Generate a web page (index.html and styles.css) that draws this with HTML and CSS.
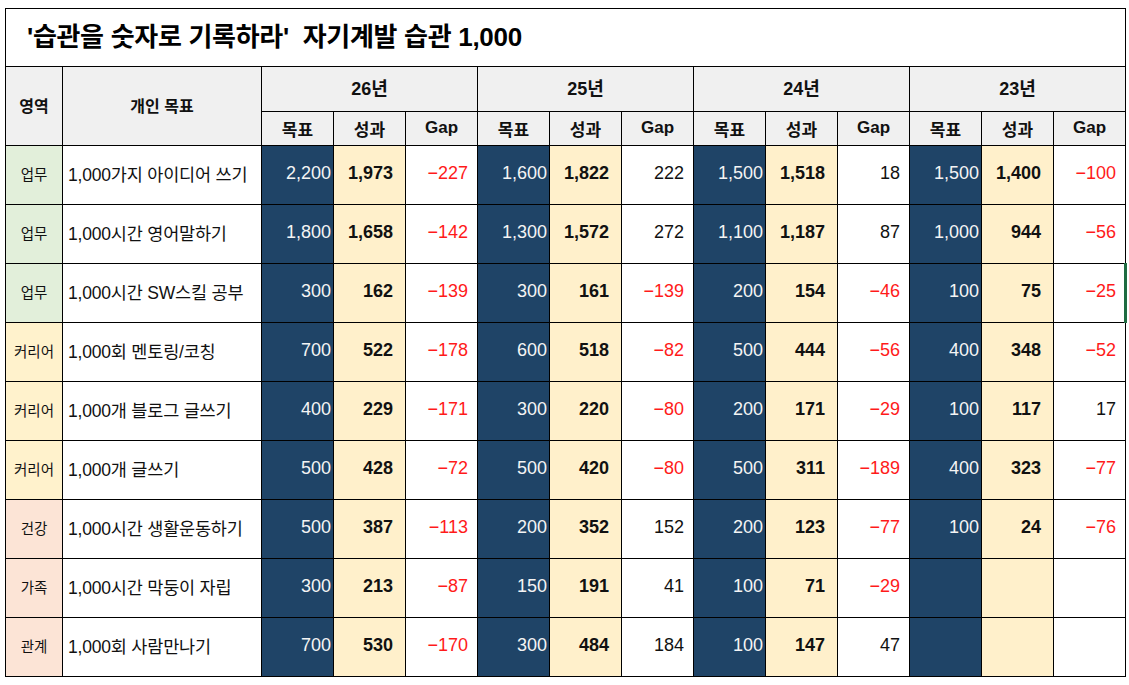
FILE: index.html
```html
<!DOCTYPE html>
<html lang="ko">
<head>
<meta charset="utf-8">
<title>습관 1,000</title>
<link rel="stylesheet" href="styles.css">
</head>
<body>
<table class="sheet">
  <colgroup>
    <col class="c-area"><col class="c-goal">
    <col class="c-num"><col class="c-num"><col class="c-num">
    <col class="c-num"><col class="c-num"><col class="c-num">
    <col class="c-num"><col class="c-num"><col class="c-num">
    <col class="c-num"><col class="c-num"><col class="c-num">
  </colgroup>
  <thead>
    <tr class="title-row"><th colspan="14" class="title">'습관을 숫자로 기록하라'&nbsp; 자기계발 습관 1,000</th></tr>
    <tr class="year-row">
      <th rowspan="2" class="h area-h">영역</th>
      <th rowspan="2" class="h goal-h">개인 목표</th>
      <th colspan="3" class="h year">26년</th>
      <th colspan="3" class="h year">25년</th>
      <th colspan="3" class="h year">24년</th>
      <th colspan="3" class="h year">23년</th>
    </tr>
    <tr class="sub-row">
      <th class="h sub">목표</th><th class="h sub">성과</th><th class="h sub">Gap</th>
      <th class="h sub">목표</th><th class="h sub">성과</th><th class="h sub">Gap</th>
      <th class="h sub">목표</th><th class="h sub">성과</th><th class="h sub">Gap</th>
      <th class="h sub">목표</th><th class="h sub">성과</th><th class="h sub">Gap</th>
    </tr>
  </thead>
  <tbody>
    <tr>
      <td class="area work">업무</td><td class="goal">1,000가지 아이디어 쓰기</td>
      <td class="t">2,200</td><td class="r">1,973</td><td class="g neg">−227</td>
      <td class="t">1,600</td><td class="r">1,822</td><td class="g">222</td>
      <td class="t">1,500</td><td class="r">1,518</td><td class="g">18</td>
      <td class="t">1,500</td><td class="r">1,400</td><td class="g neg">−100</td>
    </tr>
    <tr>
      <td class="area work">업무</td><td class="goal">1,000시간 영어말하기</td>
      <td class="t">1,800</td><td class="r">1,658</td><td class="g neg">−142</td>
      <td class="t">1,300</td><td class="r">1,572</td><td class="g">272</td>
      <td class="t">1,100</td><td class="r">1,187</td><td class="g">87</td>
      <td class="t">1,000</td><td class="r">944</td><td class="g neg">−56</td>
    </tr>
    <tr>
      <td class="area work">업무</td><td class="goal">1,000시간 SW스킬 공부</td>
      <td class="t">300</td><td class="r">162</td><td class="g neg">−139</td>
      <td class="t">300</td><td class="r">161</td><td class="g neg">−139</td>
      <td class="t">200</td><td class="r">154</td><td class="g neg">−46</td>
      <td class="t">100</td><td class="r">75</td><td class="g neg selected">−25<span class="sel-mark"></span></td>
    </tr>
    <tr>
      <td class="area career">커리어</td><td class="goal">1,000회 멘토링/코칭</td>
      <td class="t">700</td><td class="r">522</td><td class="g neg">−178</td>
      <td class="t">600</td><td class="r">518</td><td class="g neg">−82</td>
      <td class="t">500</td><td class="r">444</td><td class="g neg">−56</td>
      <td class="t">400</td><td class="r">348</td><td class="g neg">−52</td>
    </tr>
    <tr>
      <td class="area career">커리어</td><td class="goal">1,000개 블로그 글쓰기</td>
      <td class="t">400</td><td class="r">229</td><td class="g neg">−171</td>
      <td class="t">300</td><td class="r">220</td><td class="g neg">−80</td>
      <td class="t">200</td><td class="r">171</td><td class="g neg">−29</td>
      <td class="t">100</td><td class="r">117</td><td class="g">17</td>
    </tr>
    <tr>
      <td class="area career">커리어</td><td class="goal">1,000개 글쓰기</td>
      <td class="t">500</td><td class="r">428</td><td class="g neg">−72</td>
      <td class="t">500</td><td class="r">420</td><td class="g neg">−80</td>
      <td class="t">500</td><td class="r">311</td><td class="g neg">−189</td>
      <td class="t">400</td><td class="r">323</td><td class="g neg">−77</td>
    </tr>
    <tr>
      <td class="area life">건강</td><td class="goal">1,000시간 생활운동하기</td>
      <td class="t">500</td><td class="r">387</td><td class="g neg">−113</td>
      <td class="t">200</td><td class="r">352</td><td class="g">152</td>
      <td class="t">200</td><td class="r">123</td><td class="g neg">−77</td>
      <td class="t">100</td><td class="r">24</td><td class="g neg">−76</td>
    </tr>
    <tr>
      <td class="area life">가족</td><td class="goal">1,000시간 막둥이 자립</td>
      <td class="t">300</td><td class="r">213</td><td class="g neg">−87</td>
      <td class="t">150</td><td class="r">191</td><td class="g">41</td>
      <td class="t">100</td><td class="r">71</td><td class="g neg">−29</td>
      <td class="t"></td><td class="r"></td><td class="g"></td>
    </tr>
    <tr>
      <td class="area life">관계</td><td class="goal">1,000회 사람만나기</td>
      <td class="t">700</td><td class="r">530</td><td class="g neg">−170</td>
      <td class="t">300</td><td class="r">484</td><td class="g">184</td>
      <td class="t">100</td><td class="r">147</td><td class="g">47</td>
      <td class="t"></td><td class="r"></td><td class="g"></td>
    </tr>
  </tbody>
</table>
</body>
</html>
```

FILE: styles.css
```css
html, body {
  margin: 0;
  padding: 0;
  background: #ffffff;
}
body {
  padding: 8px 0 0 5px;
  font-family: "Liberation Sans", "Noto Sans CJK KR", Arial, sans-serif;
  color: #111111;
}
.sheet {
  border-collapse: collapse;
  table-layout: fixed;
  width: 1120px;
}
.c-area { width: 57px; }
.c-goal { width: 199px; }
.c-num { width: 72px; }

.sheet th, .sheet td {
  border: 1px solid #000000;
  padding: 0;
  overflow: hidden;
  white-space: nowrap;
}

.title-row { height: 58px; }
.sheet .title {
  text-align: left;
  padding-left: 21px;
  padding-bottom: 6px;
  font-size: 26px;
  font-weight: 700;
  letter-spacing: -0.3px;
  color: #000;
  background: #ffffff;
}

.year-row { height: 45px; }
.sub-row { height: 34px; }
.sheet .h {
  background: #f0f0f0;
  font-weight: 700;
  text-align: center;
  color: #111;
}
.sheet .area-h, .sheet .goal-h { font-size: 16px; padding-bottom: 2px; }
.sheet .year { font-size: 18px; padding-bottom: 5px; }
.sheet .sub { font-size: 17px; padding-bottom: 1px; }

.sheet tbody tr { height: 59px; }
.sheet tbody td { padding-bottom: 4px; }

.sheet .area {
  font-size: 14.5px;
  text-align: center;
  color: #111;
}
.sheet .work { background: #e2efda; }
.sheet .career { background: #fff2cc; }
.sheet .life { background: #fce4d6; }

.sheet .goal {
  font-size: 17.5px;
  padding-left: 5px;
  text-align: left;
  background: #ffffff;
  color: #111;
  letter-spacing: -0.2px;
}

.sheet .t {
  background: #1f4467;
  color: #f4f4f4;
  text-align: right;
  padding-right: 2px;
  font-size: 18px;
}
.sheet .r {
  background: #fff0cb;
  color: #111;
  font-weight: 700;
  text-align: right;
  padding-right: 12px;
  font-size: 18px;
}
.sheet .g {
  background: #ffffff;
  text-align: right;
  padding-right: 9px;
  font-size: 18px;
  color: #111;
}
.sheet .g.neg { color: #ff1a1a; }

.sheet .selected { position: relative; overflow: visible; }
.sel-mark {
  position: absolute;
  top: -1px;
  bottom: -1px;
  right: -2px;
  width: 3px;
  background: #1e6b41;
}
```
